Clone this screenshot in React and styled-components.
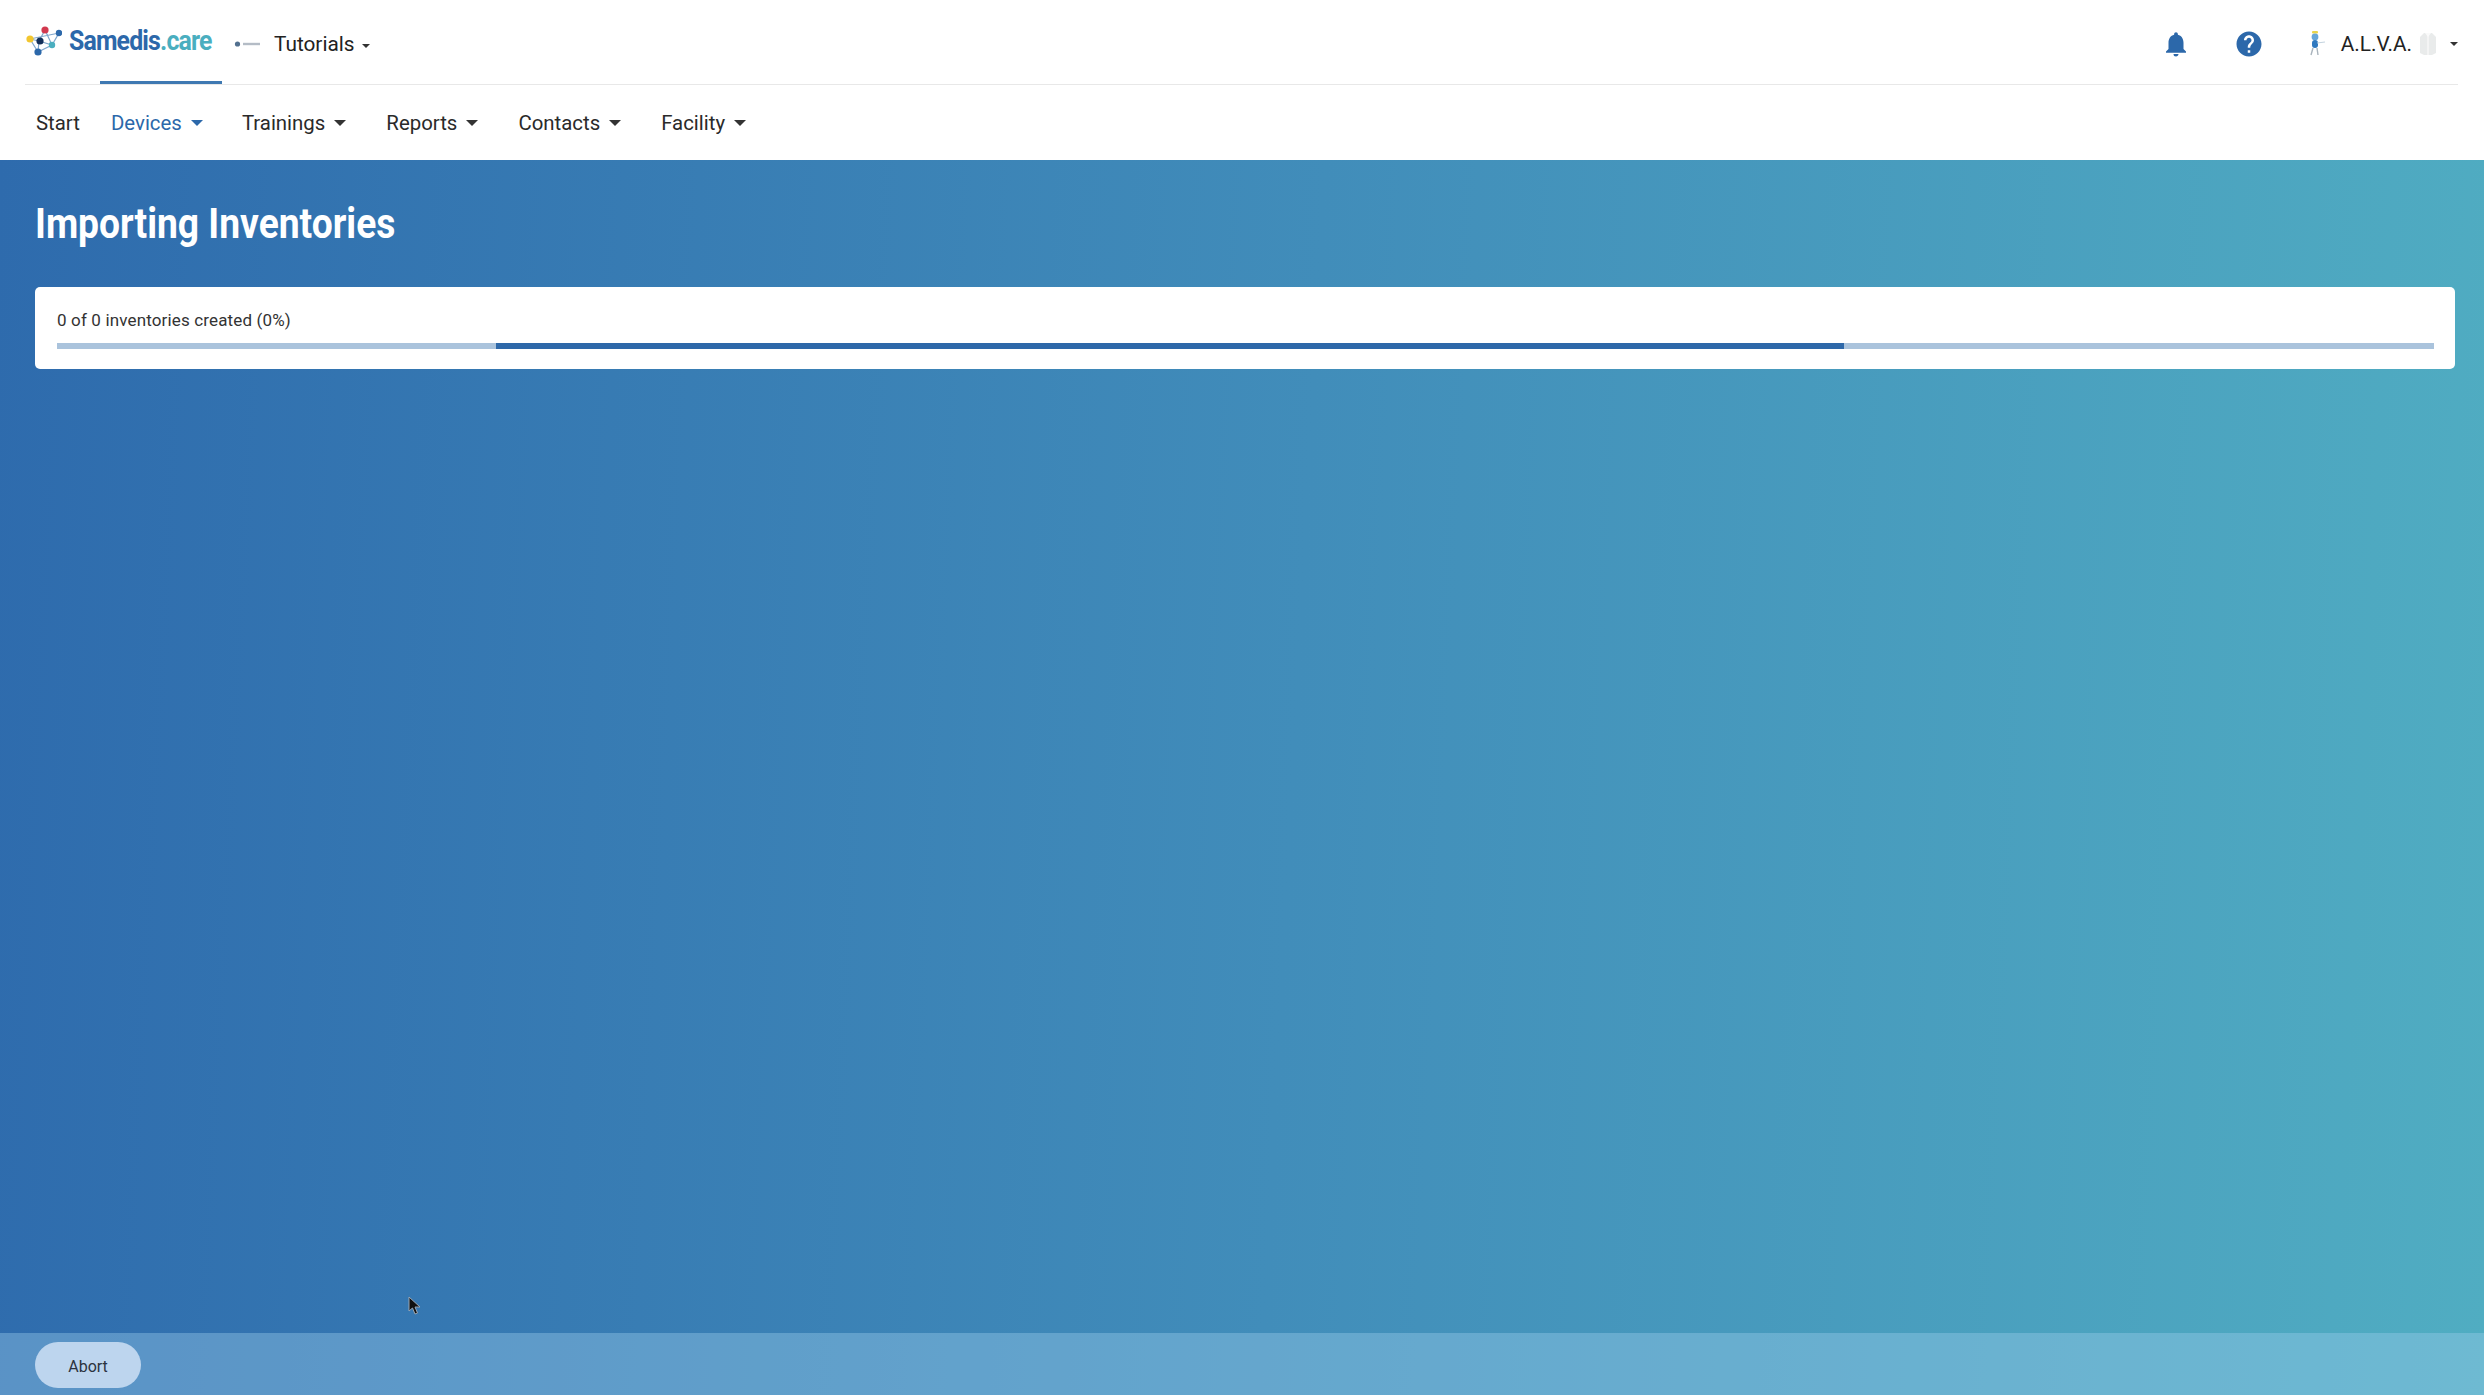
import React from "react";
import styled, { createGlobalStyle } from "styled-components";
import { MdNotifications, MdHelp } from "react-icons/md";

const Global = createGlobalStyle`
  html, body { margin: 0; padding: 0; height: 100%; }
  body { font-family: Roboto, "Liberation Sans", sans-serif; color: #222; background: #fff; }
  #root { height: 100%; }
`;

const Page = styled.div`
  position: relative;
  display: flex;
  flex-direction: column;
  height: 1395px;
  overflow: hidden;
`;

const Header = styled.header`
  flex: none;
  height: 160px;
  background: #fff;
  padding: 0 26px 0 25px;
  box-sizing: border-box;
`;

const TopBar = styled.div`
  display: flex;
  align-items: center;
  height: 85px;
  border-bottom: 1px solid #e8e8e8;
  box-sizing: border-box;
  padding-top: 4px;
`;

const Brand = styled.div`
  display: flex;
  align-items: center;
  gap: 7px;
  margin-top: -6px;
  padding-left: 1px;
`;

const LogoSvg = styled.svg`
  margin-top: 2px;
`;

const BrandText = styled.span`
  display: inline-block;
  font-size: 27px;
  font-weight: 700;
  color: #2c68aa;
  letter-spacing: -0.9px;
  transform: scaleX(0.92);
  transform-origin: left center;
  width: 142px;
  white-space: nowrap;
`;

const BrandAccent = styled.span`
  color: #4aaebf;
`;

const TenantSwitch = styled.div`
  display: flex;
  align-items: center;
  margin-left: 23px;
  gap: 12px;
  font-size: 20.8px;
  color: #222;
`;

const Caret = styled.span`
  display: inline-block;
  width: 0;
  height: 0;
  border-left: ${p => p.$size || 6}px solid transparent;
  border-right: ${p => p.$size || 6}px solid transparent;
  border-top: ${p => p.$size || 6}px solid ${p => p.$color || "#333"};
  margin-left: ${p => p.$gap ?? 10}px;
`;

const TenantCaret = styled(Caret)`
  vertical-align: middle;
`;

const Spacer = styled.div`
  flex: 1;
`;

const ActionIcon = styled.div`
  display: flex;
  color: #2c68aa;
  margin-right: ${p => p.$mr}px;
`;

const UserMenu = styled.div`
  display: flex;
  align-items: center;
  font-size: 20.8px;
  color: #222;
`;

const UserName = styled.span`
  margin: 0 6px 0 12px;
`;

const Nav = styled.nav`
  display: flex;
  align-items: center;
  height: 75px;
`;

const NavItem = styled.div`
  position: relative;
  display: flex;
  align-items: center;
  font-size: 20.4px;
  padding-top: ${p => p.$pt || 0}px;
  color: ${p => (p.$active ? "#2c68aa" : "#2a2a2a")};
  margin-left: ${p => p.$ml}px;
`;

const ActiveMark = styled.span`
  position: absolute;
  left: -11px;
  right: -19px;
  top: -30px;
  height: 3px;
  background: #3f79b2;
`;

const Main = styled.main`
  flex: 1;
  display: flex;
  flex-direction: column;
  background: linear-gradient(93deg, #2e6bad 0%, #418dba 52%, #50adc2 100%);
`;

const Content = styled.div`
  flex: 1;
  padding: 0 29px 0 35px;
`;

const Title = styled.h1`
  margin: 0;
  padding-top: 41px;
  font-size: 43px;
  line-height: 45px;
  font-weight: 700;
  color: #fff;
  transform: scaleX(0.865);
  transform-origin: left center;
  white-space: nowrap;
`;

const Card = styled.section`
  margin-top: 41px;
  height: 82px;
  background: #fff;
  border-radius: 5px;
  padding: 23px 21px 0 22px;
  box-sizing: border-box;
`;

const Status = styled.div`
  font-size: 17px;
  line-height: 20px;
  letter-spacing: 0.15px;
  color: #333;
`;

const Track = styled.div`
  position: relative;
  margin-top: 13px;
  height: 6px;
  background: #aac3dc;
  overflow: hidden;
`;

const TrackFill = styled.div`
  position: absolute;
  top: 0;
  bottom: 0;
  left: 18.45%;
  width: 56.75%;
  background: #2e68a9;
`;

const Footer = styled.footer`
  flex: none;
  height: 62px;
  display: flex;
  align-items: center;
  padding: 2px 0 0 35px;
  box-sizing: border-box;
  background: rgba(155, 204, 234, 0.4);
`;

const AbortButton = styled.button`
  width: 106px;
  height: 46px;
  border: 0;
  border-radius: 23px;
  padding: 2px 0 0;
  background: #bdd5ee;
  color: #2b3340;
  font-family: Roboto, sans-serif;
  font-size: 16px;
`;

const Cursor = styled.svg`
  position: absolute;
  left: 408px;
  top: 1296px;
`;

function LogoMark() {
  return (
    <LogoSvg width="36" height="34" viewBox="0 0 36 34">
      <g stroke="#7fa6cc" strokeWidth="1.2" fill="none">
        <path d="M19 5 L13 16 L12 27 L26 20 L33 8 L4 14 L13 16 L26 20 L19 5" />
        <path d="M12 27 L4 14" />
      </g>
      <circle cx="19" cy="5" r="3.6" fill="#d2394f" />
      <circle cx="4" cy="14" r="3.6" fill="#f2c62f" />
      <circle cx="33" cy="8" r="3.2" fill="#2c68aa" />
      <circle cx="14" cy="16" r="3.6" fill="#14305a" />
      <circle cx="26" cy="20" r="3.2" fill="#4aaebf" />
      <circle cx="12" cy="27" r="3.6" fill="#2c68aa" />
    </LogoSvg>
  );
}

function TutorialsMark() {
  return (
    <svg width="28" height="10" viewBox="0 0 28 10">
      <circle cx="3.5" cy="5" r="2.6" fill="#52708f" />
      <rect x="9" y="3.8" width="17" height="2.4" fill="#b4bcc6" />
    </svg>
  );
}

function AlvaFigure() {
  return (
    <svg width="22" height="26" viewBox="0 0 22 26">
      <rect x="5" y="0" width="6" height="2.5" rx="1" fill="#e8d44a" />
      <circle cx="8" cy="6" r="3.4" fill="#67a6d8" />
      <rect x="5" y="9" width="6" height="8" rx="3" fill="#2f78bf" />
      <path d="M10 12 L18 11" stroke="#c3d3df" strokeWidth="1.2" />
      <path d="M6 17 L4 24 M10 17 L11 24" stroke="#a9b4bd" strokeWidth="1.4" />
    </svg>
  );
}

function CoatFigure() {
  return (
    <svg width="20" height="24" viewBox="0 0 20 24">
      <path d="M6 1 L14 1 L18 5 L18 21 L14 23 L6 23 L2 21 L2 5 Z" fill="#e9ebeb" />
      <path d="M10 3 L10 23" stroke="#f7f7f7" strokeWidth="1.6" />
      <path d="M7 1 L10 5 L13 1" fill="#fafafa" />
    </svg>
  );
}

const navItems = [
  { label: "Start", ml: 11, caret: false, pt: 1 },
  { label: "Devices", ml: 31, caret: true, active: true },
  { label: "Trainings", ml: 39, caret: true },
  { label: "Reports", ml: 40, caret: true },
  { label: "Contacts", ml: 40, caret: true },
  { label: "Facility", ml: 40, caret: true },
];

export default function App() {
  return (
    <Page>
      <Global />
      <Header>
        <TopBar>
          <Brand>
            <LogoMark />
            <BrandText>
              Samedis<BrandAccent>.care</BrandAccent>
            </BrandText>
          </Brand>
          <TenantSwitch>
            <TutorialsMark />
            <span>
              Tutorials
              <TenantCaret $size={4.5} $gap={7} />
            </span>
          </TenantSwitch>
          <Spacer />
          <ActionIcon $mr={43}>
            <MdNotifications size={30} />
          </ActionIcon>
          <ActionIcon $mr={43}>
            <MdHelp size={30} />
          </ActionIcon>
          <UserMenu>
            <AlvaFigure />
            <UserName>A.L.V.A.</UserName>
            <CoatFigure />
            <Caret $size={4.5} $gap={12} />
          </UserMenu>
        </TopBar>
        <Nav>
          {navItems.map(item => (
            <NavItem key={item.label} $ml={item.ml} $pt={item.pt} $active={item.active}>
              {item.active && <ActiveMark />}
              {item.label}
              {item.caret && <Caret $size={6} $gap={9} $color={item.active ? "#2c68aa" : "#333"} />}
            </NavItem>
          ))}
        </Nav>
      </Header>
      <Main>
        <Content>
          <Title>Importing Inventories</Title>
          <Card>
            <Status>0 of 0 inventories created (0%)</Status>
            <Track>
              <TrackFill />
            </Track>
          </Card>
        </Content>
        <Footer>
          <AbortButton>Abort</AbortButton>
        </Footer>
      </Main>
      <Cursor width="14" height="20" viewBox="0 0 14 20">
        <path d="M1 1 L1 15 L4.5 12 L7 18 L9.5 17 L7 11 L12 11 Z" fill="#111" stroke="#9aa6b2" strokeWidth="1" />
      </Cursor>
    </Page>
  );
}
